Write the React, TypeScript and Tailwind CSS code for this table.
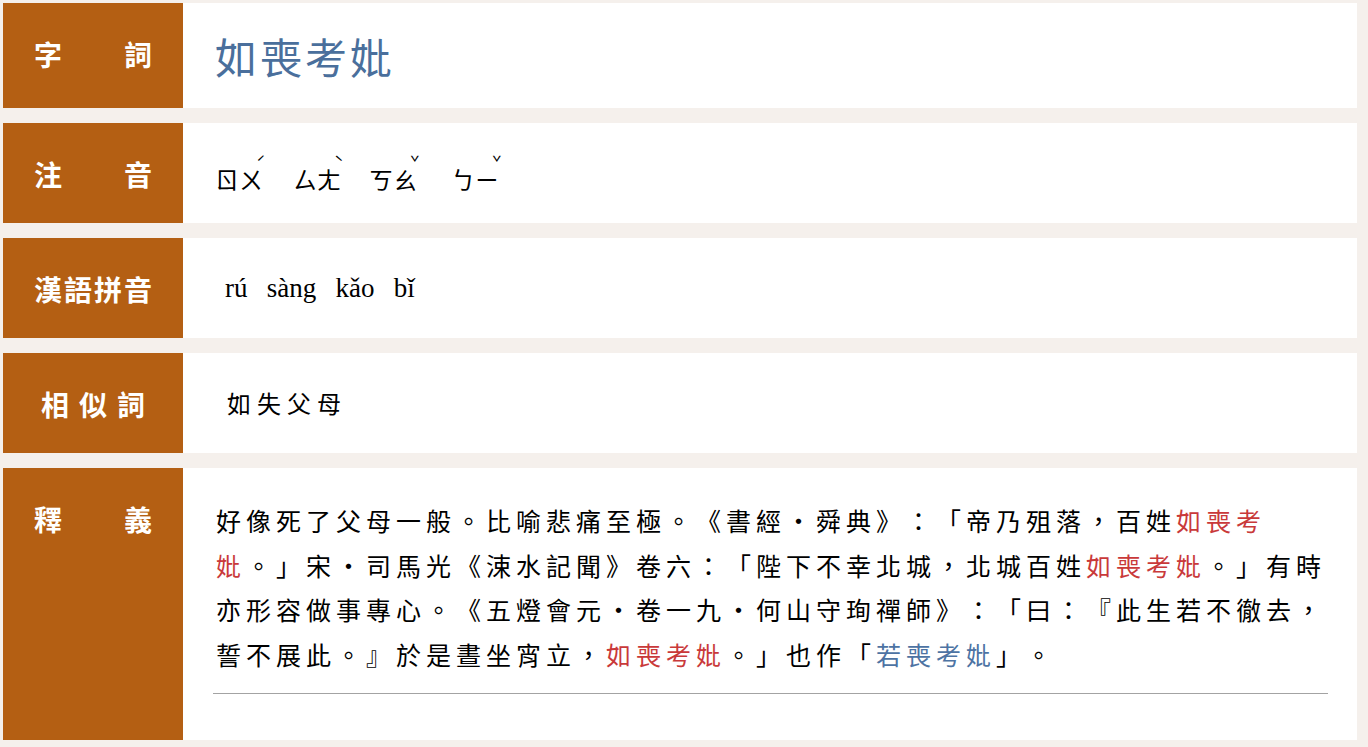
const cjk = "font-['Noto_Sans_CJK_TC','Noto_Sans_CJK_JP',sans-serif]";

type LabelProps = {
  text: string;
  width: string;
};

function Label({ text, width }: LabelProps) {
  return (
    <div className="flex w-[180px] shrink-0 justify-center bg-[#b45f13] pt-[35px]">
      <div
        className={`${cjk} ${width} text-justify text-[28px] font-bold leading-[32px] text-white [text-align-last:justify]`}
      >
        {text}
      </div>
    </div>
  );
}

type SyllableProps = {
  sounds: string;
  tone: string;
  width: string;
};

function Syllable({ sounds, tone, width }: SyllableProps) {
  return (
    <span className={`relative inline-block ${width}`}>
      {sounds}
      <span className="absolute left-[41px] top-[-13px] text-[16px] leading-none">
        {tone}
      </span>
    </span>
  );
}

export default function App() {
  const red = "text-[#c9393a]";

  return (
    <div className="flex min-h-screen flex-col gap-[15px] bg-[#f5f0ec] pb-[7px] pl-[3px] pr-[11px] pt-[3px]">
      <div className="flex h-[105px] bg-white">
        <Label text="字詞" width="w-[118px]" />
        <div className="flex flex-1 items-center pl-[32px]">
          <span
            className={`${cjk} text-[42px] leading-none tracking-[3px] text-[#4a6f9c]`}
          >
            如喪考妣
          </span>
        </div>
      </div>

      <div className="flex h-[100px] bg-white">
        <Label text="注音" width="w-[118px]" />
        <div
          className={`${cjk} flex flex-1 items-center pl-[32px] pt-[12px] text-[24px] leading-none text-black`}
        >
          <Syllable sounds="ㄖㄨ" tone="ˊ" width="w-[78px]" />
          <Syllable sounds="ㄙㄤ" tone="ˋ" width="w-[76px]" />
          <Syllable sounds="ㄎㄠ" tone="ˇ" width="w-[82px]" />
          <Syllable sounds="ㄅㄧ" tone="ˇ" width="w-[60px]" />
        </div>
      </div>

      <div className="flex h-[100px] bg-white">
        <Label text="漢語拼音" width="w-[118px]" />
        <div className="flex flex-1 items-center pl-[42px]">
          <span className="font-['Liberation_Serif',serif] text-[27px] leading-none text-black [word-spacing:12.5px]">
            rú sàng kǎo bǐ
          </span>
        </div>
      </div>

      <div className="flex h-[100px] bg-white">
        <Label text="相似詞" width="w-[104px]" />
        <div className="flex flex-1 items-center pl-[44px]">
          <span className={`${cjk} text-[24px] leading-none tracking-[6px] text-black`}>
            如失父母
          </span>
        </div>
      </div>

      <div className="flex bg-white">
        <Label text="釋義" width="w-[118px]" />
        <div className="flex-1 pb-[46px] pl-[30px] pr-[29px] pt-[30px]">
          <p
            className={`${cjk} pl-[3px] text-[25px] leading-[44.7px] tracking-[5px] text-black [text-spacing-trim:space-all]`}
          >
            好像死了父母一般。比喻悲痛至極。《書經・舜典》：「帝乃殂落，百姓
            <span className={red}>如喪考妣</span>
            。」宋・司馬光《涑水記聞》卷六：「陛下不幸北城，北城百姓
            <span className={red}>如喪考妣</span>
            。」有時亦形容做事專心。《五燈會元・卷一九・何山守珣禪師》：「曰：『此生若不徹去，誓不展此。』於是晝坐宵立，
            <span className={red}>如喪考妣</span>
            。」也作「<span className="text-[#4d73a3]">若喪考妣</span>」。
          </p>
          <div className="mt-[16px] h-px bg-[#a3a3a3]" />
        </div>
      </div>
    </div>
  );
}
